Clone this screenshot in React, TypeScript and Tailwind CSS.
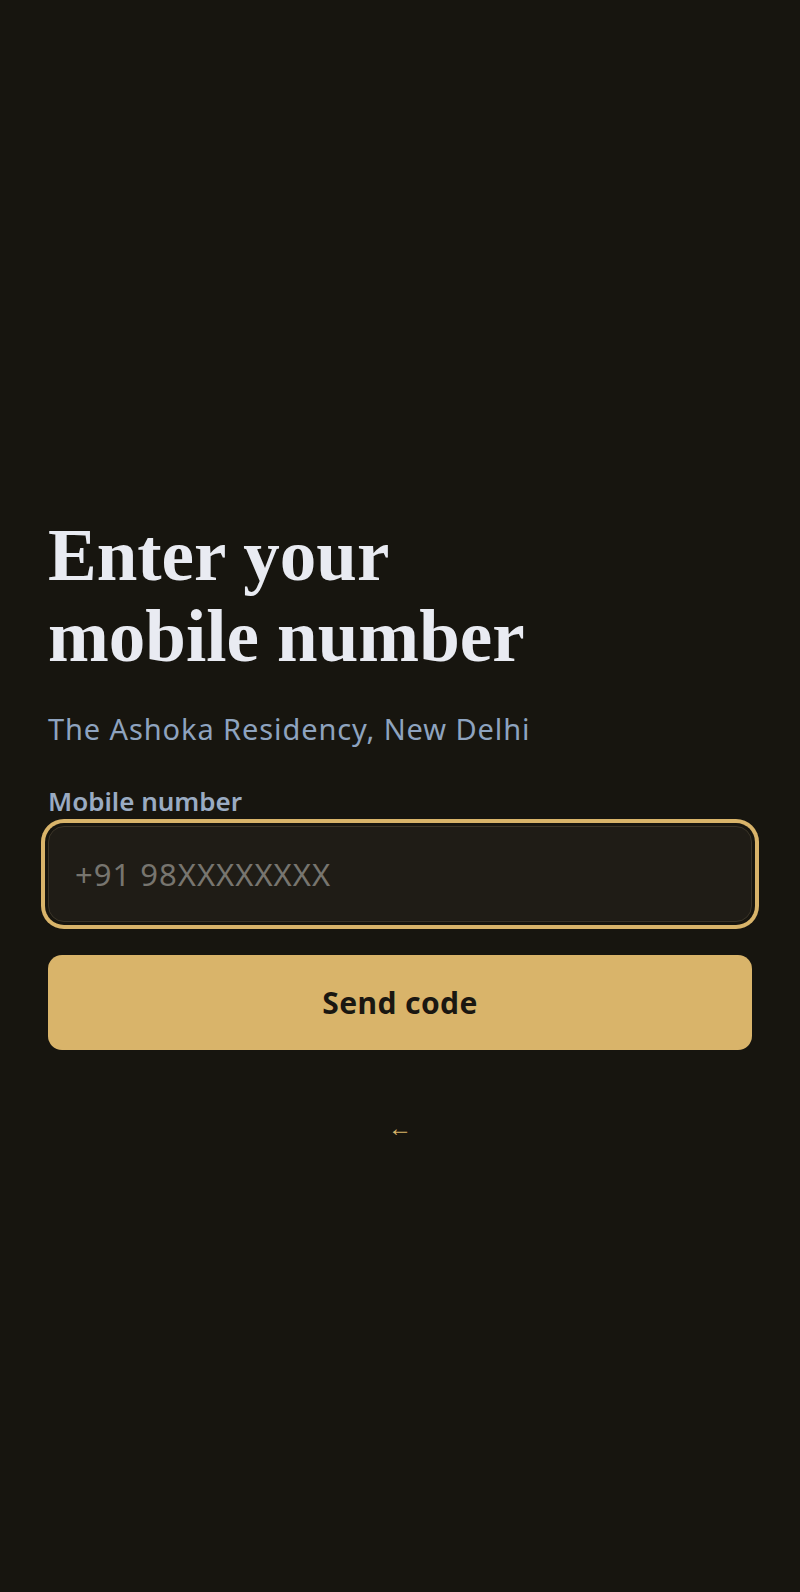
import React, { useState } from 'react'

// Phone login step: ask for mobile number, then send OTP
export default function App() {
  const [phone, setPhone] = useState('')

  return (
    <div className="min-h-screen w-full bg-[#17150f] flex flex-col justify-center px-12 pt-[68px]" style={{ fontFamily: '"Noto Sans", "Open Sans", sans-serif' }}>
      <h1
        className="-mt-[2px] text-[73px] leading-[81px] font-bold text-[#e9ebf2]"
        style={{ fontFamily: '"Liberation Serif", "DejaVu Serif", serif' }}
      >
        Enter your
        <br />
        mobile number
      </h1>

      <p className="mt-[34px] text-[29px] leading-9 tracking-[0.9px] text-[#8ea3bf]">The Ashoka Residency, New Delhi</p>

      <label htmlFor="phone" className="mt-[38px] block text-[26px] leading-8 font-semibold text-[#9aabc2]">
        Mobile number
      </label>
      <input
        id="phone"
        type="tel"
        autoFocus
        value={phone}
        onChange={(e) => setPhone(e.target.value)}
        placeholder="+91 98XXXXXXXX"
        className="mt-[9px] h-[96px] w-full rounded-[16px] border border-[#3a3428] bg-[#1f1c16] px-[26px] text-[31px] tracking-[1px] text-[#e9ebf2] caret-white placeholder:text-[#77756f] outline-none ring-[4px] ring-[#d9b46a] ring-offset-[3px] ring-offset-[#17150f]"
      />

      <button
        type="button"
        className="mt-[33px] h-[95px] w-full rounded-[14px] bg-[#d9b46a] text-[30px] tracking-[0.4px] font-bold text-[#1a1711]"
      >
        Send code
      </button>

      <button type="button" className="mt-[61px] self-center text-[24px] leading-8 text-[#d9b46a]">
        ←
      </button>
    </div>
  )
}
